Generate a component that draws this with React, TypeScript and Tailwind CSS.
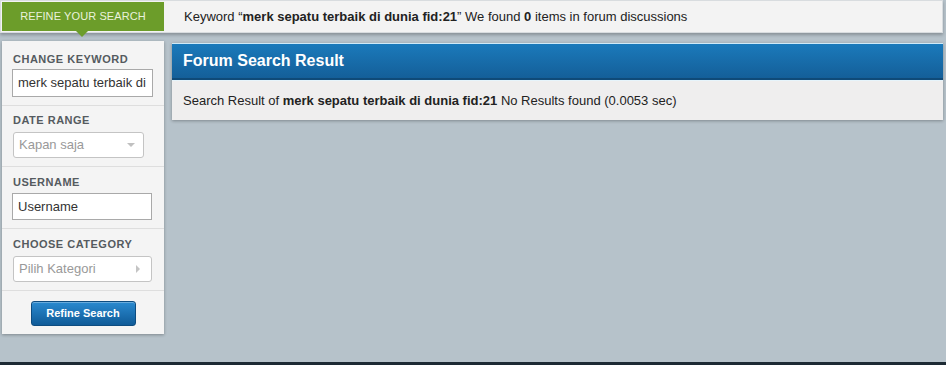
import React from "react";

const labelCls =
  "block text-[11px] leading-[14px] font-bold tracking-[0.5px] text-[#555b60] uppercase";

function Section({ label, children, className }: { label: string; children: React.ReactNode; className: string }) {
  return (
    <div className={`px-[10px] border-b border-[#dedede] ${className}`}>
      <span className={`${labelCls} pl-[1px]`}>{label}</span>
      {children}
    </div>
  );
}

export default function App() {
  return (
    <div
      className="w-[946px] h-[365px] bg-[#b6c2ca] flex flex-col overflow-hidden"
      style={{ fontFamily: '"Liberation Sans", Arial, sans-serif' }}
    >
      {/* top bar */}
      <div className="h-[33px] mr-[3px] bg-[#f3f3f3] border border-[#d8dcdf] shadow-[0_2px_3px_rgba(0,0,0,0.25)] flex items-stretch relative z-10">
        <div className="relative w-[162px] my-[1px] ml-[1px] bg-[#6c9d2a] flex items-center justify-center">
          <span className="text-[11px] tracking-[0.1px] text-[#eaf2dc]">REFINE YOUR SEARCH</span>
          <div className="absolute left-[74px] -bottom-[6px] w-0 h-0 border-l-[6px] border-r-[6px] border-t-[6px] border-l-transparent border-r-transparent border-t-[#6c9d2a]" />
        </div>
        <div className="flex items-center pl-[20px] text-[13px] text-[#222]">
          <span>
            Keyword “<b>merk sepatu terbaik di dunia fid:21</b>” We found <b>0</b> items in forum discussions
          </span>
        </div>
      </div>

      <div className="flex items-start pt-[8px]">
        {/* sidebar */}
        <div className="ml-[2px] w-[162px] bg-[#f4f4f4] shadow-[0_1px_3px_rgba(0,0,0,0.3)]">
          <Section label="Change Keyword" className="pt-[11px] pb-[8px]">
            <div className="mt-[3px] w-[141px] h-[28px] bg-white border border-[#a9a9a9] flex items-center px-[5px]">
              <span className="text-[13px] text-[#333] whitespace-nowrap">merk sepatu terbaik di</span>
            </div>
          </Section>
          <Section label="Date Range" className="pt-[7px] pb-[8px]">
            <div className="mt-[5px] ml-[1px] w-[131px] h-[26px] bg-white border border-[#c4c4c4] rounded-[3px] flex items-center justify-between px-[5px]">
              <span className="text-[13px] text-[#999]">Kapan saja</span>
              <span className="w-0 h-0 border-l-[4px] border-r-[4px] border-t-[4px] border-l-transparent border-r-transparent border-t-[#c0c0c0] mr-[3px]" />
            </div>
          </Section>
          <Section label="Username" className="pt-[8px] pb-[8px]">
            <div className="mt-[4px] w-[140px] h-[27px] bg-white border border-[#a9a9a9] flex items-center px-[5px]">
              <span className="text-[13px] text-[#333]">Username</span>
            </div>
          </Section>
          <Section label="Choose Category" className="pt-[8px] pb-[8px]">
            <div className="mt-[5px] ml-[1px] w-[139px] h-[26px] bg-white border border-[#c4c4c4] rounded-[3px] flex items-center justify-between px-[5px]">
              <span className="text-[13px] text-[#999]">Pilih Kategori</span>
              <span className="w-0 h-0 border-t-[4px] border-b-[4px] border-l-[4px] border-t-transparent border-b-transparent border-l-[#c4c4c4] mr-[6px]" />
            </div>
          </Section>
          <div className="pt-[10px] pb-[8px] flex justify-center">
            <button className="w-[105px] h-[25px] rounded-[3px] border border-[#0d4c80] bg-gradient-to-b from-[#2a8ad0] to-[#0f5b98] text-white text-[11px] font-bold shadow-[inset_0_1px_0_rgba(255,255,255,0.3)]">
              Refine Search
            </button>
          </div>
        </div>

        {/* main */}
        <div className="ml-[8px] mt-[2px] w-[771px] bg-[#efeeee] shadow-[0_1px_3px_rgba(0,0,0,0.3)]">
          <div className="h-[37px] border-t border-[#cfeaf8] bg-gradient-to-b from-[#1b7abb] to-[#145f99] border-b-2 border-b-[#0f4a78] flex items-center px-[11px]">
            <span className="text-[16px] font-bold text-white">Forum Search Result</span>
          </div>
          <div className="h-[40px] border-t border-[#e6f4fb] flex items-center px-[11px] text-[13px] text-[#222]">
            <span>
              Search Result of <b>merk sepatu terbaik di dunia fid:21</b> No Results found (0.0053 sec)
            </span>
          </div>
        </div>
      </div>

      <div className="flex-1" />
      <div className="h-[3px] bg-[#1d2a34]" />
    </div>
  );
}
